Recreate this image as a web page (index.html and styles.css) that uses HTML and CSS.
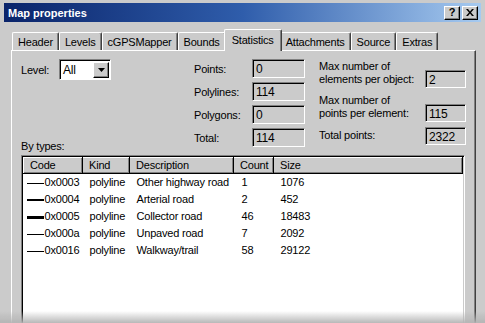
FILE: index.html
```html
<!DOCTYPE html>
<html lang="en">

<head>
    <meta charset="UTF-8">
    <title>Map properties</title>
    <link rel="stylesheet" href="styles.css">
</head>

<body>
    <div class="window">
        <div class="titlebar">
            <span class="title">Map properties</span>
            <div class="caption">
                <span class="cbtn">?</span>
                <span class="cbtn">
                    <svg width="8" height="7" viewBox="0 0 8 7"><path d="M0 0h2l2 2.5L6 0h2L5 3.5 8 7H6L4 4.5 2 7H0l3-3.5z" fill="#000"/></svg>
                </span>
            </div>
        </div>

        <div class="tabs">
            <span class="tab">Header</span>
            <span class="tab">Levels</span>
            <span class="tab">cGPSMapper</span>
            <span class="tab">Bounds</span>
            <span class="tab active">Statistics</span>
            <span class="tab">Attachments</span>
            <span class="tab">Source</span>
            <span class="tab">Extras</span>
        </div>

        <div class="panel">
            <div class="top">
                <div class="level">
                    <div class="level-row">
                        <span class="level-label">Level:</span>
                        <div class="combo">
                            <span class="combo-val">All</span>
                            <span class="combo-btn">
                                <svg width="7" height="4" viewBox="0 0 7 4"><path d="M0 0h7L3.5 4z" fill="#000"/></svg>
                            </span>
                        </div>
                    </div>
                    <div class="bytypes">By types:</div>
                </div>

                <div class="counts">
                    <span>Points:</span><div class="field">0</div>
                    <span>Polylines:</span><div class="field">114</div>
                    <span>Polygons:</span><div class="field">0</div>
                    <span>Total:</span><div class="field">114</div>
                </div>

                <div class="maxes">
                    <div class="mrow">
                        <span class="mlabel">Max number of<br>elements per object:</span>
                        <div class="field small">2</div>
                    </div>
                    <div class="mrow second">
                        <span class="mlabel">Max number of<br>points per element:</span>
                        <div class="field small">115</div>
                    </div>
                    <div class="mrow third">
                        <span class="mlabel">Total points:</span>
                        <div class="field small">2322</div>
                    </div>
                </div>
            </div>

            <div class="list">
                <table>
                    <colgroup>
                        <col class="c-code">
                        <col class="c-kind">
                        <col class="c-desc">
                        <col class="c-count">
                        <col>
                    </colgroup>
                    <thead>
                        <tr>
                            <th>Code</th>
                            <th>Kind</th>
                            <th>Description</th>
                            <th>Count</th>
                            <th>Size</th>
                        </tr>
                    </thead>
                    <tbody>
                        <tr>
                            <td class="code"><i class="line w1"></i>0x0003</td>
                            <td>polyline</td>
                            <td>Other highway road</td>
                            <td>1</td>
                            <td>1076</td>
                        </tr>
                        <tr>
                            <td class="code"><i class="line w2"></i>0x0004</td>
                            <td>polyline</td>
                            <td>Arterial road</td>
                            <td>2</td>
                            <td>452</td>
                        </tr>
                        <tr>
                            <td class="code"><i class="line w3"></i>0x0005</td>
                            <td>polyline</td>
                            <td>Collector road</td>
                            <td>46</td>
                            <td>18483</td>
                        </tr>
                        <tr>
                            <td class="code"><i class="line w1"></i>0x000a</td>
                            <td>polyline</td>
                            <td>Unpaved road</td>
                            <td>7</td>
                            <td>2092</td>
                        </tr>
                        <tr>
                            <td class="code"><i class="line w1"></i>0x0016</td>
                            <td>polyline</td>
                            <td>Walkway/trail</td>
                            <td>58</td>
                            <td>29122</td>
                        </tr>
                    </tbody>
                </table>
            </div>
        </div>
    </div>
    <div class="fade"></div>
</body>

</html>
```

FILE: styles.css
```css
* {
    margin: 0;
    padding: 0;
    box-sizing: border-box;
}

body {
    background: #cbcbcb;
    font-family: "Liberation Sans", Arial, sans-serif;
    font-size: 11px;
    letter-spacing: -0.2px;
    color: #000;
    overflow: hidden;
    height: 323px;
}

.window {
    padding: 3px 4px 0 4px;
}

/* title bar */
.titlebar {
    height: 19px;
    display: flex;
    align-items: center;
    justify-content: space-between;
    padding: 0 3px 0 4px;
    background: linear-gradient(to right, #0a246a 0%, #2f5dab 50%, #a6caf0 100%);
}

.title {
    color: #fff;
    font-weight: bold;
    font-size: 11px;
    letter-spacing: 0;
}

.caption {
    display: flex;
    gap: 2px;
}

.cbtn {
    width: 16px;
    height: 14px;
    display: flex;
    align-items: center;
    justify-content: center;
    background: #cbcbcb;
    border-top: 1px solid #fff;
    border-left: 1px solid #fff;
    border-right: 1px solid #000;
    border-bottom: 1px solid #000;
    box-shadow: inset -1px -1px #808080;
    font-weight: bold;
    font-size: 11px;
    line-height: 1;
}

/* tabs */
.tabs {
    display: flex;
    align-items: flex-end;
    height: 21px;
    margin-top: 7px;
    padding-left: 8px;
}

.tab {
    height: 18px;
    padding: 0 5px;
    display: flex;
    align-items: center;
    background: #cbcbcb;
    border-top: 1px solid #fff;
    border-left: 1px solid #fff;
    border-right: 1px solid #404040;
    box-shadow: inset -1px 0 #808080;
    border-radius: 2px 2px 0 0;
}

.tab.active {
    position: relative;
    z-index: 1;
    height: 22px;
    margin: 0 -2px -1px -2px;
    padding: 0 7px 2px 7px;
}

/* page */
.panel {
    margin: 0 5px 0 7px;
    height: 280px;
    border-top: 1px solid #fff;
    border-left: 1px solid #fff;
    border-right: 1px solid #404040;
    box-shadow: inset -1px 0 #808080;
    padding: 8px 0 0 9px;
}

.top {
    display: flex;
    height: 96px;
}

.level {
    width: 173px;
    display: flex;
    flex-direction: column;
    justify-content: space-between;
}

.level-row {
    display: flex;
    align-items: center;
}

.level-label {
    width: 38px;
}

.combo {
    width: 52px;
    height: 21px;
    display: flex;
    align-items: center;
    justify-content: space-between;
    background: #fff;
    border-top: 1px solid #808080;
    border-left: 1px solid #808080;
    border-right: 1px solid #fff;
    border-bottom: 1px solid #fff;
    box-shadow: inset 1px 1px #000;
    padding: 1px 1px 0 3px;
    font-size: 12px;
}

.combo-btn {
    width: 16px;
    height: 16px;
    display: flex;
    align-items: center;
    justify-content: center;
    background: #cbcbcb;
    border-top: 1px solid #fff;
    border-left: 1px solid #fff;
    border-right: 1px solid #000;
    border-bottom: 1px solid #000;
    box-shadow: inset -1px -1px #808080;
}

.bytypes {
    line-height: 13px;
    margin-bottom: 2px;
}

.counts {
    display: grid;
    grid-template-columns: 58px 53px;
    grid-auto-rows: 19px;
    row-gap: 4px;
    align-items: center;
    align-content: start;
}

.field {
    height: 19px;
    background: #cbcbcb;
    border-top: 1px solid #808080;
    border-left: 1px solid #808080;
    border-right: 1px solid #fff;
    border-bottom: 1px solid #fff;
    box-shadow: inset 1px 1px #000;
    padding: 2px 0 0 3px;
    line-height: 14px;
    font-size: 12px;
}

.field.small {
    width: 41px;
    height: 18px;
}

.maxes {
    margin-left: 14px;
    padding-top: 1px;
}

.mrow {
    display: flex;
    align-items: flex-end;
}

.mrow.second {
    margin-top: 6px;
}

.mrow.third {
    margin-top: 5px;
    align-items: center;
}

.mlabel {
    width: 106px;
    line-height: 13px;
    padding-bottom: 2px;
}

.third .mlabel {
    padding-bottom: 1px;
}

/* list view */
.list {
    width: 444px;
    height: 175px;
    background: #fff;
    border-top: 1px solid #808080;
    border-left: 1px solid #808080;
    border-right: 1px solid #fff;
    border-bottom: 1px solid #fff;
    box-shadow: inset 1px 1px #000, inset -1px 0 #cbcbcb;
    padding: 1px 1px 0 1px;
}

table {
    width: 440px;
    table-layout: fixed;
    border-collapse: collapse;
}

.c-code {
    width: 59px;
}

.c-kind {
    width: 47px;
}

.c-desc {
    width: 104px;
}

.c-count {
    width: 40px;
}

th {
    height: 16px;
    font-weight: normal;
    text-align: left;
    background: #cbcbcb;
    border-top: 1px solid #fff;
    border-left: 1px solid #fff;
    border-right: 1px solid #000;
    border-bottom: 1px solid #000;
    box-shadow: inset -1px -1px #808080;
    padding: 0 0 0 6px;
    line-height: 13px;
    white-space: nowrap;
}

td {
    height: 17px;
    padding: 0 0 0 7px;
    white-space: nowrap;
    line-height: 17px;
}

td:nth-child(4) {
    padding-left: 8px;
}

td.code {
    padding-left: 3px;
}

.line {
    display: inline-block;
    width: 17px;
    margin-right: 1px;
    vertical-align: middle;
    background: #000;
}

.w1 {
    height: 1px;
}

.w2 {
    height: 2px;
}

.w3 {
    height: 3px;
}

/* soft darkening at the lower edge of the shot */
.fade {
    position: fixed;
    left: 0;
    right: 0;
    bottom: 0;
    height: 12px;
    background: linear-gradient(to bottom, rgba(185, 185, 185, 0), rgba(180, 180, 180, 0.95));
}
```
